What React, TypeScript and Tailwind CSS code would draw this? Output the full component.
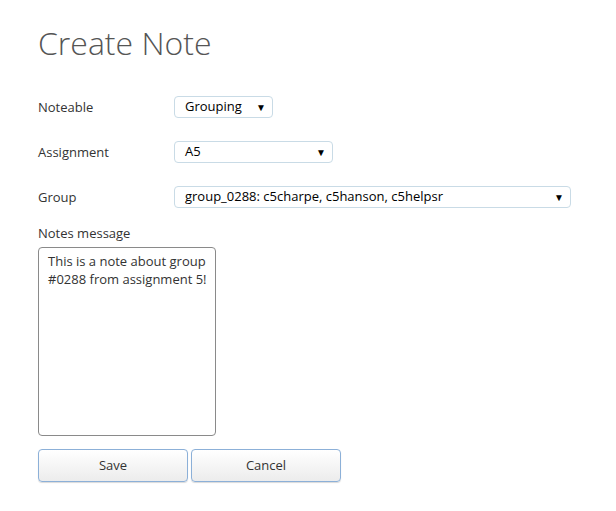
export default function App() {
  return (
    <div className="min-h-[511px] w-[616px] bg-white px-[38px] pt-[21px] text-[13px] text-[#333]" style={{ fontFamily: '"Open Sans", sans-serif' }}>
      <h1 className="text-[32px] font-light leading-[44px] text-[#555]">Create Note</h1>

      <div className="mt-[31px] flex flex-col gap-[23px]">
        <Row label="Noteable">
          <FakeSelect value="Grouping" width="w-[99px]" />
        </Row>
        <Row label="Assignment">
          <FakeSelect value="A5" width="w-[159px]" />
        </Row>
        <Row label="Group">
          <FakeSelect value="group_0288: c5charpe, c5hanson, c5helpsr" width="w-[397px]" />
        </Row>
      </div>

      <div className="mt-[16px] leading-[18px]">Notes message</div>
      <div className="mt-[5px] h-[189px] w-[178px] rounded-[4px] border border-[#8a8a8a] pl-[9px] pr-[3px] pt-[4px] leading-[18px] text-[#333]">
        This is a note about group #0288 from assignment 5!
      </div>

      <div className="mt-[13px] flex gap-[3px]">
        <Btn label="Save" />
        <Btn label="Cancel" />
      </div>
    </div>
  );
}

function Row({ label, children }: { label: string; children: React.ReactNode }) {
  return (
    <div className="flex items-center">
      <div className="w-[136px] leading-[18px]">{label}</div>
      {children}
    </div>
  );
}

function FakeSelect({ value, width }: { value: string; width: string }) {
  return (
    <div className={`${width} flex h-[22px] items-center justify-between rounded-[4px] border border-[#c9dbe6] pl-[10px] pr-[6px] text-[13px] text-black`}>
      <span>{value}</span>
      <span className="text-[10px] leading-none">▼</span>
    </div>
  );
}

function Btn({ label }: { label: string }) {
  return (
    <button className="h-[33px] w-[150px] rounded-[4px] border border-[#8cb0d8] bg-gradient-to-b from-white to-[#ececec] text-[13px] text-[#333] shadow-[0_1px_1px_rgba(0,0,0,0.15)]">
      {label}
    </button>
  );
}
